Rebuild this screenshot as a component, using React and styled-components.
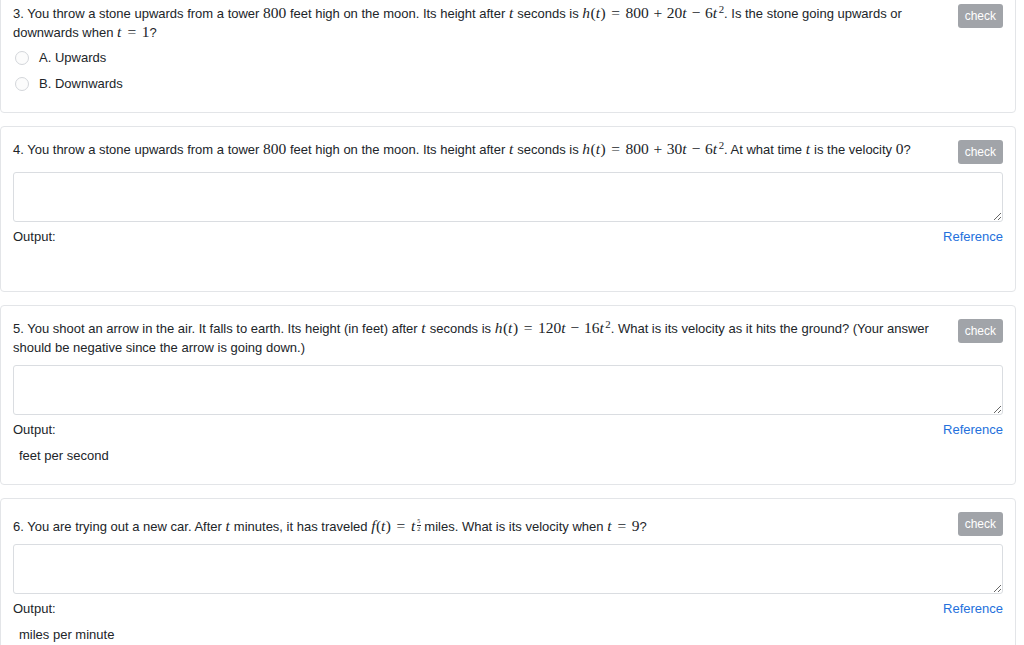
import React from "react";
import styled, { createGlobalStyle } from "styled-components";

const GlobalStyle = createGlobalStyle`
  html, body {
    margin: 0;
    padding: 0;
    background: #fff;
    overflow: hidden;
  }
  body {
    font-family: "Liberation Sans", Arial, sans-serif;
    font-size: 13px;
    color: #212529;
  }
`;

const Page = styled.main`
  margin: -10px 8px 0 0;
`;

const Card = styled.section`
  border: 1px solid #e3e5e8;
  border-radius: 4px;
  padding: 13px 12px 19px;
  margin-bottom: 13px;
  background: #fff;
`;

const Header = styled.div`
  display: flex;
  align-items: flex-start;
  gap: 12px;
`;

const QuestionText = styled.div`
  flex: 1;
  line-height: 19px;
  padding-top: ${(p) => (p.$tall ? "5px" : "0")};
`;

const CheckButton = styled.button`
  flex: none;
  height: 24px;
  padding: 0 7px;
  border: none;
  border-radius: 3px;
  background: #a1a4a9;
  color: #fff;
  font-family: "Liberation Sans", Arial, sans-serif;
  font-size: 12px;
  cursor: pointer;
`;

const Options = styled.div`
  display: flex;
  flex-direction: column;
  gap: 7px;
  margin-top: 6px;
`;

const Option = styled.label`
  display: flex;
  align-items: center;
  gap: 10px;
  padding-left: 2px;
  line-height: 19px;
`;

const RadioDot = styled.span`
  width: 12px;
  height: 12px;
  border-radius: 50%;
  border: 1px solid #d3d6da;
  background: #fcfcfc;
`;

const AnswerBox = styled.textarea`
  display: block;
  box-sizing: border-box;
  width: 100%;
  height: 50px;
  margin: 8px 0 0;
  border: 1px solid #dadde1;
  border-radius: 3px;
  resize: vertical;
  font-family: "Liberation Sans", Arial, sans-serif;
  font-size: 13px;
`;

const OutputRow = styled.div`
  display: flex;
  justify-content: space-between;
  margin-top: 5px;
  line-height: 19px;
`;

const RefLink = styled.a`
  color: #2470dc;
  text-decoration: none;
`;

const Unit = styled.div`
  margin-top: 7px;
  padding-left: 6px;
  min-height: 19px;
  line-height: 19px;
`;

const Math = styled.span`
  font-family: "Liberation Serif", "Times New Roman", serif;
  font-size: 15.5px;
  line-height: 1;
  white-space: nowrap;
`;

const V = styled.i`
  font-style: italic;
  margin-right: 0.03em;
`;

const Op = styled.span`
  margin: 0 ${(p) => (p.$rel ? "0.36em" : "0.3em")};
`;

const Sup = styled.sup`
  font-size: 0.7em;
  line-height: 0;
  vertical-align: 0.45em;
  margin-left: 1px;
`;

const Frac = styled.span`
  display: inline-flex;
  flex-direction: column;
  align-items: center;
  font-size: 6px;
  line-height: 6px;
  vertical-align: 8px;
  margin-left: 1px;
`;

const FracBar = styled.span`
  width: 4px;
  border-top: 0.5px solid #212529;
  margin: 0.5px 0;
`;

const t = <Math><V>t</V></Math>;

const Question = ({ header, tall, children, unit, output = true }) => (
  <Card>
    <Header>
      <QuestionText $tall={tall}>{header}</QuestionText>
      <CheckButton type="button">check</CheckButton>
    </Header>
    {children}
    {output && (
      <>
        <AnswerBox />
        <OutputRow>
          <span>Output:</span>
          <RefLink href="#">Reference</RefLink>
        </OutputRow>
        <Unit>{unit}</Unit>
      </>
    )}
  </Card>
);

export default function App() {
  return (
    <>
      <GlobalStyle />
      <Page>
        <Question
          output={false}
          header={
            <>
              3. You throw a stone upwards from a tower <Math>800</Math> feet high on the moon. Its height after {t} seconds is{" "}
              <Math>
                <V>h</V>(<V>t</V>)<Op $rel>=</Op>800<Op>+</Op>20<V>t</V><Op>−</Op>6<V>t</V><Sup>2</Sup>
              </Math>
              . Is the stone going upwards or downwards when{" "}
              <Math>
                <V>t</V><Op $rel>=</Op>1
              </Math>
              ?
            </>
          }
        >
          <Options>
            <Option><RadioDot />A. Upwards</Option>
            <Option><RadioDot />B. Downwards</Option>
          </Options>
        </Question>

        <Question
          header={
            <>
              4. You throw a stone upwards from a tower <Math>800</Math> feet high on the moon. Its height after {t} seconds is{" "}
              <Math>
                <V>h</V>(<V>t</V>)<Op $rel>=</Op>800<Op>+</Op>30<V>t</V><Op>−</Op>6<V>t</V><Sup>2</Sup>
              </Math>
              . At what time {t} is the velocity <Math>0</Math>?
            </>
          }
        />

        <Question
          unit="feet per second"
          header={
            <>
              5. You shoot an arrow in the air. It falls to earth. Its height (in feet) after {t} seconds is{" "}
              <Math>
                <V>h</V>(<V>t</V>)<Op $rel>=</Op>120<V>t</V><Op>−</Op>16<V>t</V><Sup>2</Sup>
              </Math>
              . What is its velocity as it hits the ground? (Your answer should be negative since the arrow is going down.)
            </>
          }
        />

        <Question
          tall
          unit="miles per minute"
          header={
            <>
              6. You are trying out a new car. After {t} minutes, it has traveled{" "}
              <Math>
                <V>f</V>(<V>t</V>)<Op $rel>=</Op><V>t</V>
                <Frac>
                  <span>5</span>
                  <FracBar />
                  <span>2</span>
                </Frac>
              </Math>{" "}
              miles. What is its velocity when{" "}
              <Math>
                <V>t</V><Op $rel>=</Op>9
              </Math>
              ?
            </>
          }
        />
      </Page>
    </>
  );
}
